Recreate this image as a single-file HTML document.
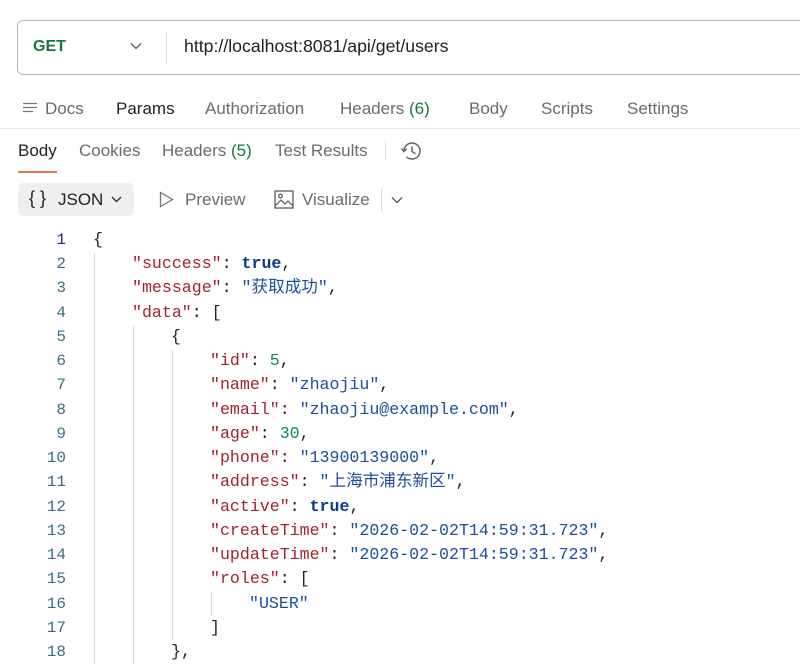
<!DOCTYPE html>
<html><head><meta charset="utf-8"><style>
*{margin:0;padding:0;box-sizing:border-box}
body{width:800px;height:664px;overflow:hidden;background:#fff;font-family:"Liberation Sans","Noto Sans CJK SC",sans-serif;position:relative;color:#212121}
.a{position:absolute;white-space:nowrap}
.url{left:17px;top:20px;width:800px;height:55px;border:1px solid #b8b8b8;border-radius:6px}
.t{font-size:17px;color:#6b6b6b}
.code{position:absolute;left:0;top:228px;font-family:"Liberation Mono","Noto Sans CJK SC",monospace;font-size:16.6px;line-height:24.24px}
.ln{position:absolute;left:0;width:66px;text-align:right;color:#3b6f80;font-size:16px}
.cl{position:absolute;left:93px;white-space:pre;color:#222}
.l1{left:132px}.l2{left:171px}.l3{left:210px}.l4{left:249px}
.k{color:#a3232e}.s{color:#1b4f9c}.n{color:#0e8a57}.b{color:#0d3a86;font-weight:bold}
.g{position:absolute;width:1px;background:#d8d8d8}
</style></head><body>
<div class="a url"></div>
<div class="a" style="left:33px;top:38px;font-size:16px;font-weight:bold;color:#137a3c">GET</div>
<svg class="a" style="left:130px;top:42px" width="12" height="8" viewBox="0 0 12 8"><path d="M1 1.5l5 5 5-5" fill="none" stroke="#555" stroke-width="1.3"/></svg>
<div class="a" style="left:166px;top:32px;width:1px;height:32px;background:#ddd"></div>
<div class="a" style="left:184px;top:36px;font-size:17.7px;color:#222">http://localhost:8081/api/get/users</div>

<svg class="a" style="left:23px;top:102px" width="15" height="13" viewBox="0 0 15 13"><path d="M0 1.5h14M0 5.5h14M0 9.5h10" stroke="#777" stroke-width="1.3"/></svg>
<div class="a t" style="left:45px;top:99px">Docs</div>
<div class="a t" style="left:116px;top:99px;color:#222">Params</div>
<div class="a t" style="left:205px;top:99px">Authorization</div>
<div class="a t" style="left:340px;top:99px">Headers <span style="color:#137a3c">(6)</span></div>
<div class="a t" style="left:469px;top:99px">Body</div>
<div class="a t" style="left:541px;top:99px">Scripts</div>
<div class="a t" style="left:627px;top:99px">Settings</div>
<div class="a" style="left:0;top:128px;width:800px;height:1px;background:#e8e8e8"></div>

<div class="a t" style="left:18px;top:141px;color:#222">Body</div>
<div class="a" style="left:18px;top:171px;width:39px;height:2px;background:#e8764a"></div>
<div class="a t" style="left:79px;top:141px">Cookies</div>
<div class="a t" style="left:162px;top:141px">Headers <span style="color:#137a3c">(5)</span></div>
<div class="a t" style="left:275px;top:141px">Test Results</div>
<div class="a" style="left:385px;top:141px;width:1px;height:20px;background:#ddd"></div>
<svg class="a" style="left:400px;top:140px" width="24" height="22" viewBox="0 0 24 22"><path d="M4 11a8 8 0 1 1 2.5 5.8" fill="none" stroke="#666" stroke-width="1.5"/><path d="M1.5 8.5L4 11.5 6.8 8.8" fill="none" stroke="#666" stroke-width="1.5"/><path d="M12 6.5v5l3.5 2.2" fill="none" stroke="#666" stroke-width="1.5"/></svg>

<div class="a" style="left:18px;top:183px;width:116px;height:33px;background:#efefef;border-radius:5px"></div>
<div class="a" style="left:29px;top:188px;font-size:18px;color:#222">{ }</div>
<div class="a" style="left:58px;top:190px;font-size:17px;color:#222">JSON</div>
<svg class="a" style="left:111px;top:196px" width="11" height="7" viewBox="0 0 11 7"><path d="M1 1l4.5 4.5L10 1" fill="none" stroke="#333" stroke-width="1.4"/></svg>
<svg class="a" style="left:159px;top:191px" width="15" height="17" viewBox="0 0 15 17"><path d="M1.5 1.5v14l12-7z" fill="none" stroke="#777" stroke-width="1.3"/></svg>
<div class="a t" style="left:185px;top:190px">Preview</div>
<svg class="a" style="left:274px;top:190px" width="20" height="19" viewBox="0 0 20 19"><rect x="1" y="1" width="18" height="17" fill="none" stroke="#666" stroke-width="1.4"/><circle cx="6.5" cy="6" r="1.8" fill="none" stroke="#666" stroke-width="1.3"/><path d="M1 16l6-6 4 4 3-3 5 5" fill="none" stroke="#666" stroke-width="1.3"/></svg>
<div class="a t" style="left:302px;top:190px">Visualize</div>
<div class="a" style="left:381px;top:188px;width:1px;height:24px;background:#ddd"></div>
<svg class="a" style="left:391px;top:196px" width="12" height="8" viewBox="0 0 12 8"><path d="M1 1.5l5 5 5-5" fill="none" stroke="#555" stroke-width="1.3"/></svg>

<div class="g" style="left:94px;top:253px;height:411px"></div>
<div class="g" style="left:133px;top:326px;height:338px"></div>
<div class="g" style="left:172px;top:350px;height:290px"></div>
<div class="g" style="left:211px;top:592px;height:24px"></div>

<div class="code">
<div class="ln" style="top:0;color:#1d2f6e">1</div><div class="cl" style="top:0">{</div>
<div class="ln" style="top:24.24px">2</div><div class="cl l1" style="top:24.24px"><span class="k">"success"</span>: <span class="b">true</span>,</div>
<div class="ln" style="top:48.48px">3</div><div class="cl l1" style="top:48.48px"><span class="k">"message"</span>: <span class="s">"获取成功"</span>,</div>
<div class="ln" style="top:72.72px">4</div><div class="cl l1" style="top:72.72px"><span class="k">"data"</span>: [</div>
<div class="ln" style="top:96.96px">5</div><div class="cl l2" style="top:96.96px">{</div>
<div class="ln" style="top:121.2px">6</div><div class="cl l3" style="top:121.2px"><span class="k">"id"</span>: <span class="n">5</span>,</div>
<div class="ln" style="top:145.44px">7</div><div class="cl l3" style="top:145.44px"><span class="k">"name"</span>: <span class="s">"zhaojiu"</span>,</div>
<div class="ln" style="top:169.68px">8</div><div class="cl l3" style="top:169.68px"><span class="k">"email"</span>: <span class="s">"zhaojiu@example.com"</span>,</div>
<div class="ln" style="top:193.92px">9</div><div class="cl l3" style="top:193.92px"><span class="k">"age"</span>: <span class="n">30</span>,</div>
<div class="ln" style="top:218.16px">10</div><div class="cl l3" style="top:218.16px"><span class="k">"phone"</span>: <span class="s">"13900139000"</span>,</div>
<div class="ln" style="top:242.4px">11</div><div class="cl l3" style="top:242.4px"><span class="k">"address"</span>: <span class="s">"上海市浦东新区"</span>,</div>
<div class="ln" style="top:266.64px">12</div><div class="cl l3" style="top:266.64px"><span class="k">"active"</span>: <span class="b">true</span>,</div>
<div class="ln" style="top:290.88px">13</div><div class="cl l3" style="top:290.88px"><span class="k">"createTime"</span>: <span class="s">"2026-02-02T14:59:31.723"</span>,</div>
<div class="ln" style="top:315.12px">14</div><div class="cl l3" style="top:315.12px"><span class="k">"updateTime"</span>: <span class="s">"2026-02-02T14:59:31.723"</span>,</div>
<div class="ln" style="top:339.36px">15</div><div class="cl l3" style="top:339.36px"><span class="k">"roles"</span>: [</div>
<div class="ln" style="top:363.6px">16</div><div class="cl l4" style="top:363.6px"><span class="s">"USER"</span></div>
<div class="ln" style="top:387.84px">17</div><div class="cl l3" style="top:387.84px">]</div>
<div class="ln" style="top:412.08px">18</div><div class="cl l2" style="top:412.08px">},</div>
</div>
</body></html>
